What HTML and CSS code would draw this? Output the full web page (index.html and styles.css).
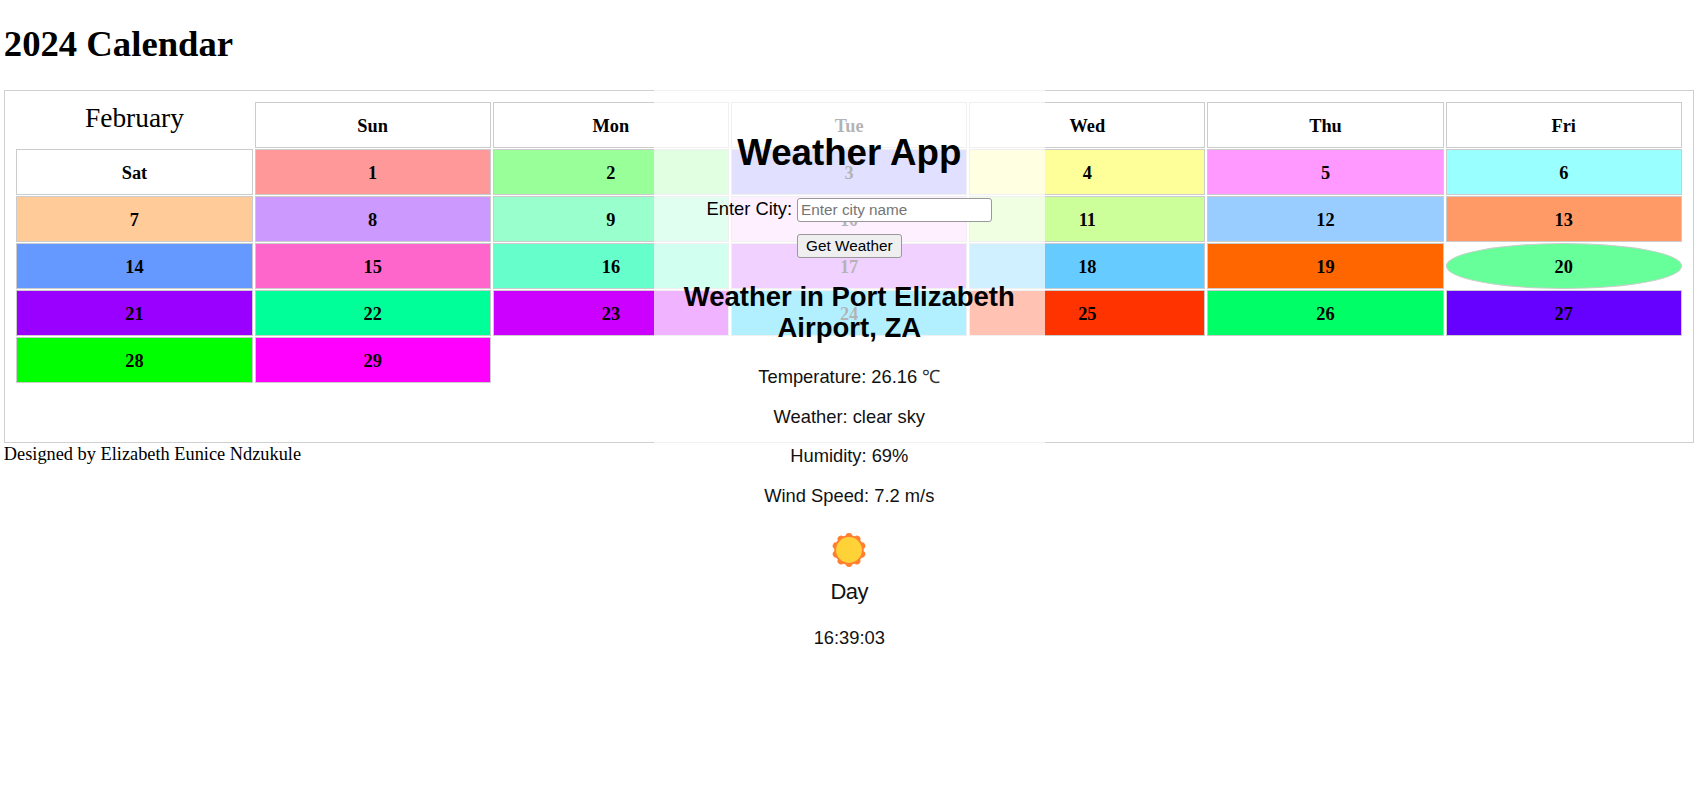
FILE: index.html
```html
<!DOCTYPE html>
<html lang="en">
<head>
<meta charset="utf-8">
<title>2024 Calendar</title>
<link rel="stylesheet" href="styles.css">
</head>
<body>
<h1 class="page-title">2024 Calendar</h1>
<main class="calendar">
  <div class="month">February</div>
  <div class="day">Sun</div><div class="day">Mon</div><div class="day">Tue</div><div class="day">Wed</div><div class="day">Thu</div><div class="day">Fri</div><div class="day">Sat</div>
  <div class="day d1">1</div><div class="day d2">2</div><div class="day d3">3</div><div class="day d4">4</div><div class="day d5">5</div><div class="day d6">6</div><div class="day d7">7</div>
  <div class="day d8">8</div><div class="day d9">9</div><div class="day d10">10</div><div class="day d11">11</div><div class="day d12">12</div><div class="day d13">13</div><div class="day d14">14</div>
  <div class="day d15">15</div><div class="day d16">16</div><div class="day d17">17</div><div class="day d18">18</div><div class="day d19">19</div><div class="day d20">20</div><div class="day d21">21</div>
  <div class="day d22">22</div><div class="day d23">23</div><div class="day d24">24</div><div class="day d25">25</div><div class="day d26">26</div><div class="day d27">27</div><div class="day d28">28</div>
  <div class="day d29">29</div>
</main>
<footer class="credit">Designed by Elizabeth Eunice Ndzukule</footer>

<section class="weather">
  <h1 class="weather-title">Weather App</h1>
  <div class="city-row"><label for="city">Enter City:</label><input id="city" class="city" type="text" placeholder="Enter city name"></div>
  <button class="get" type="button">Get Weather</button>
  <h2 class="place">Weather in Port Elizabeth Airport, ZA</h2>
  <p class="fact">Temperature: 26.16 <span class="unit">℃</span></p>
  <p class="fact">Weather: clear sky</p>
  <p class="fact">Humidity: 69%</p>
  <p class="fact">Wind Speed: 7.2 m/s</p>
  <svg class="sun" viewBox="-17 -17 34 34">
    <g fill="#ff8030">
      <circle r="14.8"/>
      <circle cy="-13.6" r="3.4"/><circle cy="-13.6" r="3.4" transform="rotate(36)"/><circle cy="-13.6" r="3.4" transform="rotate(72)"/>
      <circle cy="-13.6" r="3.4" transform="rotate(108)"/><circle cy="-13.6" r="3.4" transform="rotate(144)"/><circle cy="-13.6" r="3.4" transform="rotate(180)"/>
      <circle cy="-13.6" r="3.4" transform="rotate(216)"/><circle cy="-13.6" r="3.4" transform="rotate(252)"/><circle cy="-13.6" r="3.4" transform="rotate(288)"/>
      <circle cy="-13.6" r="3.4" transform="rotate(324)"/>
    </g>
    <circle r="12.9" fill="#ffd338"/>
  </svg>
  <div class="phase">Day</div>
  <div class="clock">16:39:03</div>
</section>
</body>
</html>
```
FILE: styles.css
```css
* { box-sizing: border-box; }
body {
  margin: 0;
  padding: 23px 5.6px 0 3.8px;
  font: 18.34px/21px "Liberation Serif", serif;
  color: #000;
  background: #fff;
}
.page-title { margin: 0 0 25px; font-size: 36.7px; line-height: 42px; }
.calendar {
  display: grid;
  grid-template-columns: repeat(7, 1fr);
  grid-auto-rows: 45.6px;
  align-content: start;
  gap: 1.5px 1.9px;
  height: 353px;
  padding: 11px 11.5px;
  border: 1px solid #d0d0d0;
}
.month { font-size: 27.4px; line-height: 32px; text-align: center; }
.day {
  padding-top: 12.8px;
  border: 1px solid #ccc;
  text-align: center;
  font-weight: bold;
}
.d1 { background: #ff9999; }
.d2 { background: #99ff99; }
.d3 { background: #9999ff; }
.d4 { background: #ffff99; }
.d5 { background: #ff99ff; }
.d6 { background: #99ffff; }
.d7 { background: #ffcc99; }
.d8 { background: #cc99ff; }
.d9 { background: #99ffcc; }
.d10 { background: #ffccff; }
.d11 { background: #ccff99; }
.d12 { background: #99ccff; }
.d13 { background: #ff9966; }
.d14 { background: #6699ff; }
.d15 { background: #ff66cc; }
.d16 { background: #66ffcc; }
.d17 { background: #cc66ff; }
.d18 { background: #66ccff; }
.d19 { background: #ff6600; }
.d20 { background: #66ff99; border-radius: 50%; }
.d21 { background: #9900ff; }
.d22 { background: #00ff99; }
.d23 { background: #cc00ff; }
.d24 { background: #00ccff; }
.d25 { background: #ff3300; }
.d26 { background: #00ff66; }
.d27 { background: #6600ff; }
.d28 { background: #00ff00; }
.d29 { background: #ff00ff; }
.credit { margin-top: 1px; }

.weather {
  position: absolute;
  top: 85px;
  left: 654px;
  width: 390.6px;
  padding: 47px 23px 23px;
  display: flex;
  flex-direction: column;
  align-items: center;
  background: rgba(255, 255, 255, 0.7);
  font-family: "Liberation Sans", Arial, sans-serif;
  text-align: center;
}
.weather-title { margin: 0 0 24px; font-size: 36.7px; line-height: 42px; }
.city-row { display: flex; gap: 5px; line-height: 21px; }
.city {
  width: 195px;
  height: 24px;
  padding: 0 3px;
  border: 1.5px solid #999;
  border-radius: 3px;
  background: #fff;
  font: 15.3px "Liberation Sans", Arial, sans-serif;
}
.city::placeholder { color: #757575; }
.get {
  width: 105px;
  height: 24px;
  margin-top: 12px;
  padding: 0;
  border: 1.5px solid #999;
  border-radius: 3px;
  background: #efefef;
  color: #000;
  font: 15.3px "Liberation Sans", Arial, sans-serif;
}
.place { margin: 23px 0 23.4px; font-size: 27.5px; line-height: 31px; }
.fact { margin: 0 0 18.5px; line-height: 21px; color: #111; }
.unit { font-family: "Liberation Serif", serif; line-height: 0; color: #333; }
.sun { width: 34px; height: 34px; margin-top: 9px; }
.phase { margin-top: 12px; font-size: 22px; line-height: 25px; letter-spacing: -0.5px; color: #111; }
.clock { margin-top: 23px; line-height: 21px; color: #111; }
```
